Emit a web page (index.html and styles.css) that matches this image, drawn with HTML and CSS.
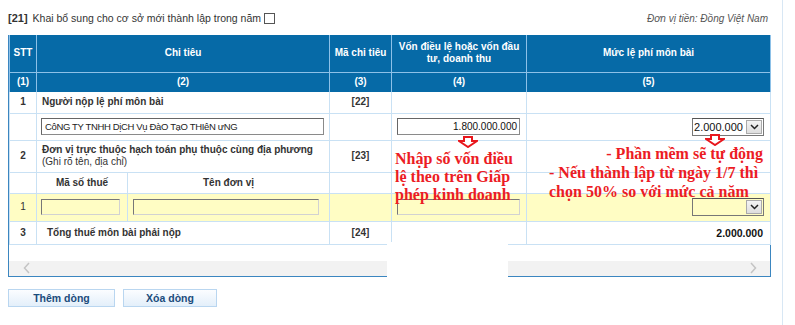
FILE: index.html
```html
<!DOCTYPE html>
<html lang="vi">
<head>
<meta charset="utf-8">
<title>Lệ phí môn bài</title>
<link rel="stylesheet" href="styles.css">
</head>
<body>
<div class="page">
  <div class="topbar">
    <div class="addl"><b>[21]</b><span>Khai bổ sung cho cơ sở mới thành lập trong năm</span><span class="chk"></span></div>
    <div class="unit">Đơn vị tiền: Đồng Việt Nam</div>
  </div>

  <div class="grid-wrap">
    <table class="grid">
      <colgroup>
        <col class="w-stt"><col class="w-mst"><col class="w-ten"><col class="w-ma"><col class="w-von"><col class="w-muc">
      </colgroup>
      <thead>
        <tr class="h1">
          <th>STT</th>
          <th colspan="2">Chi tiêu</th>
          <th>Mã chi tiêu</th>
          <th>Vốn điều lệ hoặc vốn đầu<br>tư, doanh thu</th>
          <th>Mức lệ phí môn bài</th>
        </tr>
        <tr class="h2">
          <th>(1)</th>
          <th colspan="2">(2)</th>
          <th>(3)</th>
          <th>(4)</th>
          <th>(5)</th>
        </tr>
      </thead>
      <tbody>
        <tr class="r-a">
          <td class="stt b">1</td>
          <td colspan="2" class="lbl b">Người nộp lệ phí môn bài</td>
          <td class="code">[22]</td>
          <td></td>
          <td></td>
        </tr>
        <tr class="r-b">
          <td></td>
          <td colspan="2" class="inp-cell"><span class="inp name">CôNG TY TNHH DịCH Vụ ĐàO TạO THIêN ưNG</span></td>
          <td></td>
          <td class="von-cell"><span class="inp von">1.800.000.000</span></td>
          <td class="muc-cell"><span class="sel"><span class="val">2.000.000</span><span class="btn"><svg width="9" height="6" viewBox="0 0 9 6"><path d="M1 1 L4.5 4.5 L8 1" fill="none" stroke="#222" stroke-width="1.5"/></svg></span></span></td>
        </tr>
        <tr class="r-c">
          <td class="stt b">2</td>
          <td colspan="2" class="lbl"><div class="b">Đơn vị trực thuộc hạch toán phụ thuộc cùng địa phương</div><div>(Ghi rõ tên, địa chỉ)</div></td>
          <td class="code">[23]</td>
          <td></td>
          <td></td>
        </tr>
        <tr class="r-d">
          <td></td>
          <td class="sub">Mã số thuế</td>
          <td class="sub">Tên đơn vị</td>
          <td></td>
          <td></td>
          <td></td>
        </tr>
        <tr class="r-e">
          <td class="stt">1</td>
          <td class="inp-cell"><span class="inp yel mst"></span></td>
          <td class="inp-cell2"><span class="inp yel ten"></span></td>
          <td></td>
          <td class="von-cell"><span class="inp yel von"></span></td>
          <td class="muc-cell"><span class="sel yel"><span class="val"></span><span class="btn"><svg width="9" height="6" viewBox="0 0 9 6"><path d="M1 1 L4.5 4.5 L8 1" fill="none" stroke="#222" stroke-width="1.5"/></svg></span></span></td>
        </tr>
        <tr class="r-f">
          <td class="stt b">3</td>
          <td colspan="2" class="lbl total b">Tổng thuế môn bài phải nộp</td>
          <td class="code">[24]</td>
          <td></td>
          <td class="amt">2.000.000</td>
        </tr>
      </tbody>
    </table>
    <div class="after"></div>
    <div class="hscroll">
      <svg width="8" height="12" viewBox="0 0 8 12"><path d="M6 1 L1.5 6 L6 11" fill="none" stroke="#c4c4c4" stroke-width="1.5"/></svg>
      <svg width="8" height="12" viewBox="0 0 8 12"><path d="M2 1 L6.5 6 L2 11" fill="none" stroke="#c4c4c4" stroke-width="1.5"/></svg>
    </div>
  </div>

  <div class="actions">
    <button class="btn-act w1">Thêm dòng</button>
    <button class="btn-act w2">Xóa dòng</button>
  </div>

  <div class="note note1">Nhập số vốn điều<br>lệ theo trên Giấp<br>phép kinh doanh</div>
  <div class="note note2"><div class="first">- Phần mềm sẽ tự động</div><div>- Nếu thành lập từ ngày 1/7 thì</div><div>chọn 50% so với mức cả năm</div></div>

  <svg class="arrow a1" width="20" height="12" viewBox="0 0 20 12"><path d="M6 1 H14 V5 H19 L10 11 L1 5 H6 Z" fill="#fff" stroke="#e8161c" stroke-width="2" stroke-linejoin="miter"/></svg>
  <svg class="arrow a2" width="20" height="12" viewBox="0 0 20 12"><path d="M6 1 H14 V5 H19 L10 11 L1 5 H6 Z" fill="#fff" stroke="#e8161c" stroke-width="2" stroke-linejoin="miter"/></svg>

  <div class="mask"></div>
</div>
</body>
</html>
```

FILE: styles.css
```css
* { box-sizing: border-box; }
html, body { margin: 0; padding: 0; background: #fff; }
body {
  font-family: "Liberation Sans", Arial, sans-serif;
  font-size: 10px;
  color: #333;
}
.page {
  position: relative;
  width: 783px;
  height: 325px;
  padding-left: 8px;
  border-right: 1px solid #d8e7f4;
  overflow: hidden;
}

/* top bar */
.topbar {
  width: 762px;
  height: 35px;
  padding-top: 12px;
  padding-right: 2px;
  display: flex;
  justify-content: space-between;
  align-items: flex-start;
}
.addl {
  display: flex;
  align-items: center;
  gap: 4px;
  font-size: 10.5px;
  line-height: 13px;
  color: #333;
}
.addl b { font-size: 11px; margin-right: 1px; }
.chk {
  display: inline-block;
  width: 11px;
  height: 11px;
  border: 1px solid #555;
  background: #fff;
  margin-left: -1px;
}
.unit {
  font-style: italic;
  font-size: 10px;
  line-height: 13px;
  color: #555;
}

/* grid */
.grid-wrap {
  width: 763px;
  border: 1px solid #3b86c0;
  border-top: none;
}
.grid {
  width: 761px;
  border-collapse: collapse;
  table-layout: fixed;
}
.w-stt { width: 27px; }
.w-mst { width: 91px; }
.w-ten { width: 202px; }
.w-ma { width: 62px; }
.w-von { width: 135px; }
.w-muc { width: 244px; }

.grid th {
  background: #066aa7;
  color: #fff;
  font-weight: bold;
  font-size: 10px;
  line-height: 12px;
  text-align: center;
  border: 1px solid #8dc1e8;
  border-top: none;
  padding: 0 2px;
}
.grid tr.h1 { height: 37px; }
.grid tr.h2 { height: 20px; }
.grid tr.h2 th { border-bottom: none; }

.grid td {
  border: 1px solid #c9e1f4;
  padding: 0;
  vertical-align: middle;
  line-height: 12px;
}
.grid tbody tr:first-child td { border-top: none; }
.r-a { height: 21px; }
.r-b { height: 27px; }
.r-c { height: 32px; }
.r-d { height: 21px; }
.r-e { height: 28px; }
.r-f { height: 23px; }
.r-e td { background: #fffdc4; }

.b { font-weight: bold; }
.stt { text-align: center; }
.lbl { padding-left: 5px !important; }
.lbl.total { padding-left: 10px !important; }
.code { text-align: center; font-weight: bold; }
.sub { text-align: center; font-weight: bold; }
.amt { text-align: right; font-weight: bold; color: #111; padding-right: 7px !important; font-size: 10.5px; }

/* inputs */
.inp {
  display: block;
  height: 17px;
  border: 1px solid #8a8a8a;
  border-top-color: #666;
  border-left-color: #666;
  background: #fff;
  font-size: 10px;
  line-height: 15px;
  color: #222;
  padding: 0 3px;
  white-space: nowrap;
  overflow: hidden;
}
.inp-cell { padding-left: 4px !important; }
.inp-cell2 { padding-left: 5px !important; }
.inp.name { width: 283px; font-size: 9.5px; letter-spacing: -0.35px; }
.inp.von { width: 123px; text-align: right; padding-right: 2px; color: #111; }
.von-cell { padding-left: 5px !important; }
.inp.yel {
  background: #fffdc4;
  border-color: #d2d2d2;
  border-top-color: #777;
  border-left-color: #777;
  height: 16px;
}
.inp.mst { width: 79px; }
.inp.ten { width: 186px; }

.muc-cell { text-align: right; padding-right: 6px !important; }
.sel {
  display: inline-flex;
  align-items: stretch;
  width: 72px;
  height: 18px;
  border: 1px solid #777;
  border-top-color: #555;
  background: #fff;
  vertical-align: middle;
}
.sel.yel { background: #fffdc4; }
.sel .val {
  flex: 1;
  font-size: 11px;
  line-height: 16px;
  color: #111;
  text-align: left;
  padding-left: 1px;
}
.sel .btn {
  width: 16px;
  display: flex;
  align-items: center;
  justify-content: center;
  background: linear-gradient(#f4f4f4, #dedede);
  border: 1px solid #aaa;
  margin: 1px;
}

.after { height: 16px; }
.hscroll {
  height: 15px;
  background: #f2f2f2;
  display: flex;
  justify-content: space-between;
  align-items: center;
  padding: 0 13px 0 14px;
}

/* actions */
.actions {
  display: flex;
  gap: 8px;
  margin-top: 12px;
}
.btn-act {
  height: 18px;
  padding: 0;
  border: 1px solid #b9d6f0;
  background: linear-gradient(#fbfdff, #e3effa);
  font-family: "Liberation Sans", Arial, sans-serif;
  font-size: 10.5px;
  font-weight: bold;
  color: #1b4c7c;
  line-height: 16px;
}
.btn-act.w1 { width: 107px; }
.btn-act.w2 { width: 94px; }

/* annotations */
.note {
  position: absolute;
  font-family: "Liberation Serif", "Times New Roman", serif;
  font-weight: bold;
  font-size: 16px;
  color: #ec1c24;
  white-space: nowrap;
}
.note1 { left: 395px; top: 150px; line-height: 18px; }
.note2 { left: 549px; top: 144px; width: 214px; line-height: 19px; }
.note2 .first { text-align: right; }

.arrow { position: absolute; }
.a1 { left: 458px; top: 136px; }
.a2 { left: 705px; top: 134px; }

.mask {
  position: absolute;
  left: 387px;
  top: 242px;
  width: 121px;
  height: 90px;
  background: #fff;
}
```
